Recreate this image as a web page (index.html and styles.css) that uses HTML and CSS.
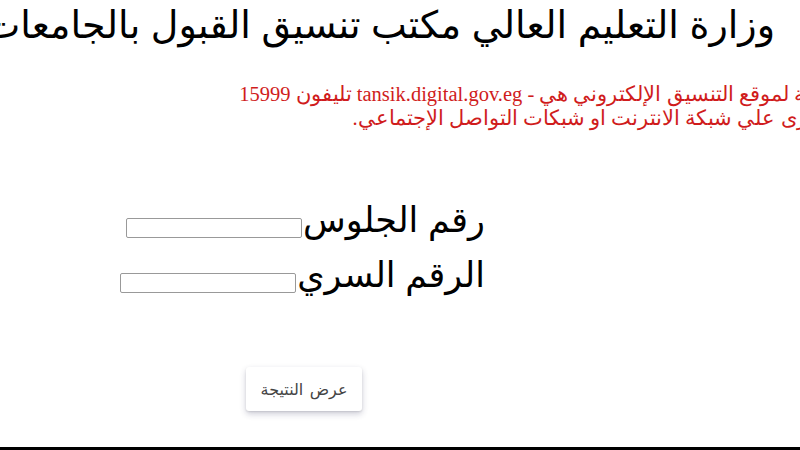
FILE: index.html
```html
<!DOCTYPE html>
<html lang="ar" dir="rtl">
<head>
<meta charset="utf-8">
<title>تنسيق القبول بالجامعات</title>
<link rel="stylesheet" href="styles.css">
</head>
<body>
<div class="page">
  <h1 class="title">وزارة التعليم العالي مكتب تنسيق القبول بالجامعات</h1>
  <div class="notice">
    <div class="notice-line notice-line-first">البوابة الرسمية لموقع التنسيق الإلكتروني هي - tansik.digital.gov.eg تليفون 15999</div>
    <div class="notice-line notice-line-second">لا تلتفت لأي أخبار أخرى علي شبكة الانترنت او شبكات التواصل الإجتماعي.</div>
  </div>
  <form class="form">
    <div class="row">
      <label class="label" for="seat">رقم الجلوس</label>
      <input class="field" id="seat" type="text">
    </div>
    <div class="row">
      <label class="label" for="secret">الرقم السري</label>
      <input class="field" id="secret" type="password">
    </div>
    <div class="actions">
      <button class="btn" type="button">عرض النتيجة</button>
    </div>
  </form>
  <div class="spacer"></div>
  <div class="bottom-line"></div>
</div>
</body>
</html>
```
FILE: styles.css
```css
html, body {
  margin: 0;
  padding: 0;
  background: #fff;
  overflow: hidden;
}
.page {
  width: 800px;
  height: 450px;
  display: flex;
  flex-direction: column;
  overflow: hidden;
}
.title {
  margin: 0;
  padding: 0 25px 0 0;
  font-family: "Liberation Sans", "DejaVu Sans", sans-serif;
  font-weight: normal;
  font-size: 38px;
  line-height: 50px;
  color: #000;
  white-space: nowrap;
  text-align: right;
}
.notice {
  margin: 32px 0 0 0;
  font-family: "Liberation Serif", "DejaVu Serif", serif;
  font-size: 20.5px;
  line-height: 24px;
  color: #d01c1c;
  white-space: nowrap;
  text-align: right;
}
.notice-line-first {
  margin-right: -122px;
}
.notice-line-second {
  margin-right: -180px;
}
.form {
  margin: 68px 315px 0 0;
  font-family: "Liberation Sans", "DejaVu Sans", sans-serif;
}
.row {
  display: flex;
  align-items: baseline;
  gap: 1px;
  height: 55px;
}
.label {
  font-size: 35px;
  line-height: 44px;
  color: #000;
}
.field {
  width: 176px;
  height: 20px;
  box-sizing: border-box;
  border: 1px solid #999;
  border-radius: 2px;
  padding: 0 4px;
  margin: 0;
  font-size: 13px;
  background: #fff;
}
.actions {
  display: flex;
  margin: 59px 123px 0 0;
}
.btn {
  width: 116px;
  height: 44px;
  border: none;
  border-radius: 3px;
  background: #fff;
  color: #444;
  font-family: "Liberation Sans", "DejaVu Sans", sans-serif;
  font-size: 16px;
  word-spacing: 2px;
  box-shadow: 0 3px 6px rgba(50, 50, 93, 0.24), 0 1px 2px rgba(0, 0, 0, 0.1);
  cursor: pointer;
}
.spacer {
  flex: 1;
}
.bottom-line {
  height: 3px;
  background: #000;
}
```
